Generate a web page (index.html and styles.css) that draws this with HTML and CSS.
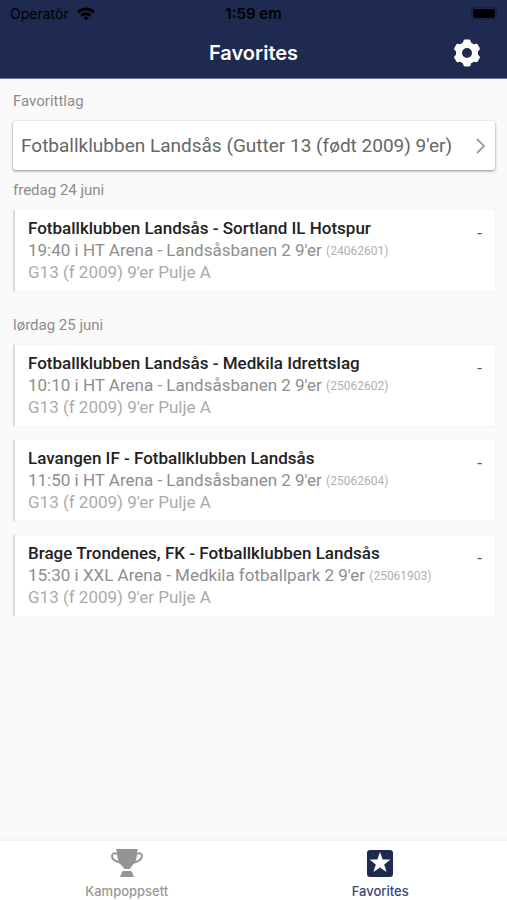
FILE: index.html
```html
<!DOCTYPE html>
<html lang="no">
<head>
  <meta charset="UTF-8" />
  <meta name="viewport" content="width=device-width, initial-scale=1" />
  <title>Favorites</title>
  <link rel="stylesheet" href="styles.css">
</head>
<body>
  <header class="header">
    <div class="status-bar">
      <div class="carrier">
        <span>Operatör</span>
        <svg width="18" height="14" viewBox="0 0 18 14" fill="none" stroke="#000" stroke-width="3">
          <path d="M1 5.2a11.6 11.6 0 0 1 16 0" />
          <path d="M4.2 8.6a7 7 0 0 1 9.6 0" />
          <path d="M9 13.5 6.3 10.7a4 4 0 0 1 5.4 0z" fill="#000" stroke="none" />
        </svg>
      </div>
      <span class="clock">1:59 em</span>
      <div class="battery"><span class="battery-level"></span></div>
    </div>
    <div class="title-bar">
      <h1>Favorites</h1>
      <button class="settings-btn" aria-label="Settings">
        <svg width="32" height="32" viewBox="-16 -16 32 32" fill="none" stroke="#fff">
          <circle r="8" stroke-width="6" />
          <g stroke-width="3" stroke-linejoin="round">
            <path id="tooth" d="M-3-9l1-3h4l1 3z" fill="#fff" />
            <use href="#tooth" transform="rotate(60)" />
            <use href="#tooth" transform="rotate(120)" />
            <use href="#tooth" transform="rotate(180)" />
            <use href="#tooth" transform="rotate(240)" />
            <use href="#tooth" transform="rotate(300)" />
          </g>
        </svg>
      </button>
    </div>
  </header>

  <main class="content">
    <h2 class="label">Favorittlag</h2>
    <a href="#" class="team">
      <span>Fotballklubben Landsås (Gutter 13 (født 2009) 9'er)</span>
      <svg width="10" height="16" viewBox="0 0 10 16" fill="none" stroke="#a0a0a0" stroke-width="2">
        <path d="M1 1l7 7-7 7" />
      </svg>
    </a>

    <h2 class="label">fredag 24 juni</h2>
    <div class="match">
      <div>
        <h3>Fotballklubben Landsås - Sortland IL Hotspur</h3>
        <p class="place">19:40 i HT Arena - Landsåsbanen 2 9'er <small>(24062601)</small></p>
        <p class="group">G13 (f 2009) 9'er Pulje A</p>
      </div>
      <span class="score">-</span>
    </div>

    <h2 class="label">lørdag 25 juni</h2>
    <div class="match">
      <div>
        <h3>Fotballklubben Landsås - Medkila Idrettslag</h3>
        <p class="place">10:10 i HT Arena - Landsåsbanen 2 9'er <small>(25062602)</small></p>
        <p class="group">G13 (f 2009) 9'er Pulje A</p>
      </div>
      <span class="score">-</span>
    </div>
    <div class="match">
      <div>
        <h3>Lavangen IF - Fotballklubben Landsås</h3>
        <p class="place">11:50 i HT Arena - Landsåsbanen 2 9'er <small>(25062604)</small></p>
        <p class="group">G13 (f 2009) 9'er Pulje A</p>
      </div>
      <span class="score">-</span>
    </div>
    <div class="match">
      <div>
        <h3>Brage Trondenes, FK - Fotballklubben Landsås</h3>
        <p class="place">15:30 i XXL Arena - Medkila fotballpark 2 9'er <small>(25061903)</small></p>
        <p class="group">G13 (f 2009) 9'er Pulje A</p>
      </div>
      <span class="score">-</span>
    </div>
  </main>

  <nav class="tabs">
    <a href="#" class="tab">
      <svg width="32" height="30" viewBox="0 0 32 30" fill="#949494">
        <path d="M5 1h22l-1 3c0 8-2 11-5 14-1 1-2 2-2 3h-6c0-1-1-2-2-3-3-3-5-6-5-14z" />
        <path d="M6 6C3 4 1 6 1 8c0 4 5 6 10 7M26 6c3-2 5 0 5 2 0 4-5 6-10 7" fill="none" stroke="#949494" stroke-width="2" />
        <path d="M12 23h8l1 1 2 5H9l2-5z" />
      </svg>
      <span>Kampoppsett</span>
    </a>
    <a href="#" class="tab active">
      <svg width="26" height="30" viewBox="0 0 26 30">
        <rect y="2" width="26" height="27" rx="3" fill="#1e2a50" />
        <path d="M13 4l2.6 7.5 7.9.1-6.300 4.800 2.300 7.600-6.500-4.500-6.500 4.500 2.300-7.600-6.300-4.800 7.900-.1z" fill="#fff" />
      </svg>
      <span>Favorites</span>
    </a>
  </nav>
</body>
</html>
```
FILE: styles.css
```css
* { box-sizing: border-box; }
body {
  min-height: 100vh;
  margin: 0;
  display: flex;
  flex-direction: column;
  font-family: Roboto, sans-serif;
  background: #fafafa;
  color: #222;
}
h1, h2, h3, p {
  margin: 0;
}
svg {
  display: block;
}
a {
  color: inherit;
  text-decoration: none;
}

.header {
  background: #1e2a50;
  border-bottom: 1px solid #6f7b94;
}
.status-bar {
  display: grid;
  grid-template-columns: 1fr auto 1fr;
  align-items: center;
  height: 27px;
  padding: 0 10px;
  font-family: Inter, sans-serif;
  font-size: 14px;
  color: #000;
}
.carrier {
  display: flex;
  align-items: center;
  gap: 8px;
}
.clock {
  font-size: 15px;
  font-weight: 600;
}
.battery {
  justify-self: end;
  padding: 1px;
  border: 1px solid #18203c;
  border-radius: 4px;
}
.battery-level {
  display: block;
  width: 22px;
  height: 9px;
  border-radius: 2px;
  background: #000;
}
.title-bar {
  display: grid;
  grid-template-columns: 1fr auto 1fr;
  align-items: center;
  height: 51px;
  padding: 0 24px;
  color: #fff;
}
.title-bar h1 {
  grid-column: 2;
  font-family: Inter, sans-serif;
  font-size: 20px;
  font-weight: 600;
}
.settings-btn {
  justify-self: end;
  padding: 0;
  border: none;
  background: none;
  cursor: pointer;
}

.content {
  flex-grow: 1;
  padding: 2px 12px 20px 13px;
}
.label {
  font-size: 15px;
  font-weight: 400;
  line-height: 40px;
  color: #8c8c8c;
}
.team {
  display: flex;
  justify-content: space-between;
  align-items: center;
  min-height: 49px;
  padding: 0 9px 0 8px;
  border-radius: 2px;
  background: #fff;
  box-shadow: 0 1px 3px rgba(0, 0, 0, 0.45);
  font-size: 19px;
  color: #666;
}
.match {
  display: flex;
  justify-content: space-between;
  margin-bottom: 14px;
  padding: 7px 13px 8px;
  border-left: 2px solid #dcdcdc;
  background: #fff;
  box-shadow: 0 0 2px rgba(0, 0, 0, 0.06);
  font-size: 17px;
  line-height: 22px;
}
.match h3 {
  font-size: 17px;
  font-weight: 500;
}
.place {
  color: #8e8e8e;
}
.place small {
  font-size: 12px;
  line-height: 1;
  vertical-align: 1px;
  color: #b0b0b0;
}
.group {
  color: #ababab;
}
.score {
  line-height: 32px;
  color: #555;
}

.tabs {
  display: flex;
  border-top: 2px solid #f4f4f4;
  background: #fff;
}
.tab {
  flex: 1;
  display: flex;
  flex-direction: column;
  align-items: center;
  gap: 4px;
  padding-top: 7px;
  font-family: Inter, sans-serif;
  font-size: 13px;
  font-weight: 500;
  line-height: 18px;
  color: #999;
}
.active {
  color: #3b4677;
}
```
